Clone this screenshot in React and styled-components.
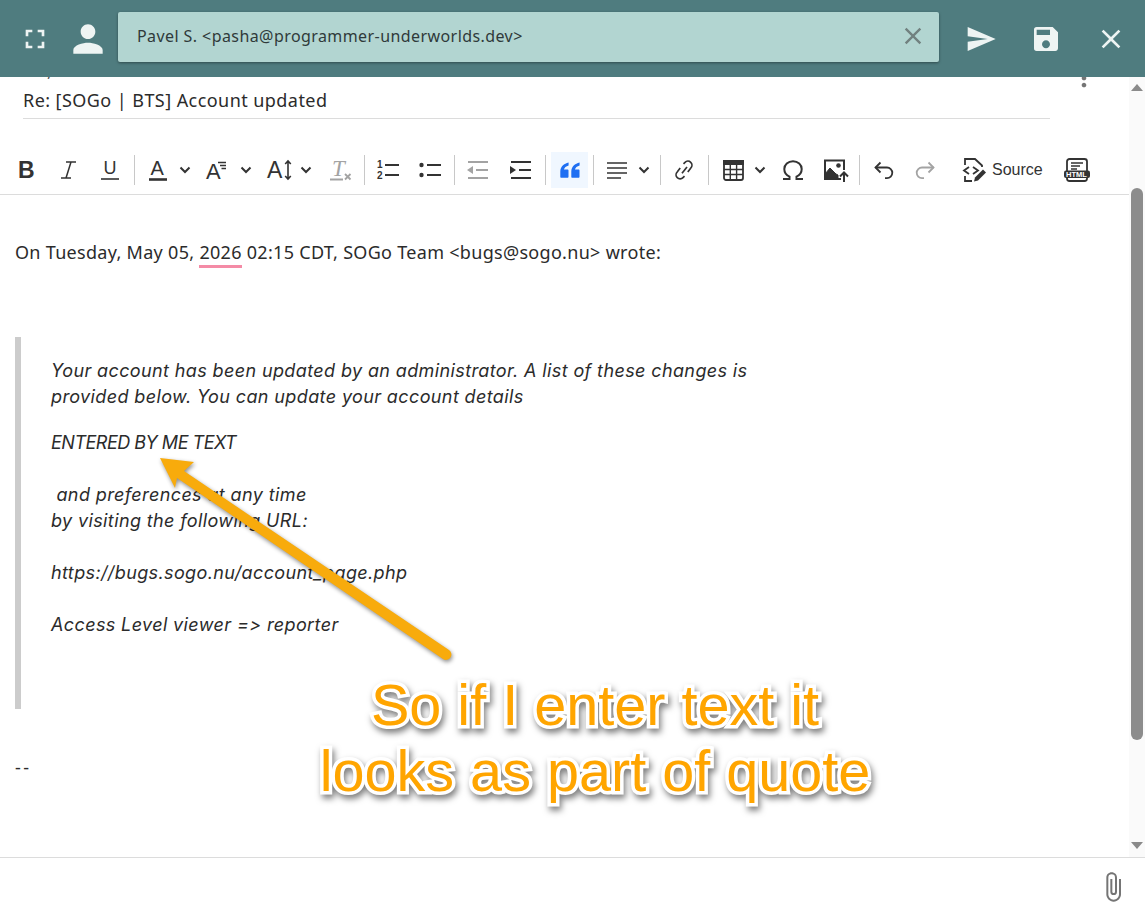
import React from 'react'
import styled, { createGlobalStyle } from 'styled-components'
import { MdFullscreen, MdPerson, MdClose, MdSend, MdSave, MdMoreVert, MdAttachFile } from 'react-icons/md'

const GlobalStyle = createGlobalStyle`
html, body { margin: 0; padding: 0; background: #fff; }
body { font-family: "Noto Sans", "Liberation Sans", sans-serif; color: #2b2b2b; }
`

const Page = styled.div`
position: relative;
width: 1145px;
height: 916px;
overflow: hidden;
display: flex;
flex-direction: column;
`

const Header = styled.header`
position: relative;
z-index: 2;
height: 77px;
flex: none;
background: #4f7c7f;
display: flex;
align-items: center;
`
const HeadIcon = styled.div`
width: ${p => p.$w}px;
margin-left: ${p => p.$ml || 0}px;
flex: none;
display: flex;
align-items: center;
justify-content: center;
color: #eef4f3;
`
const Chip = styled.div`
width: 821px;
height: 50px;
margin-left: 8px;
margin-bottom: 3px;
flex: none;
box-sizing: border-box;
padding: 0 12px 3px 19px;
background: #b2d5d1;
border-radius: 2px;
box-shadow: 0 1px 3px rgba(0, 0, 0, 0.4);
display: flex;
align-items: center;
justify-content: space-between;
font-size: 16px;
letter-spacing: 0.42px;
color: #2f3a3a;
svg { color: #71817f; }
`

const Main = styled.main`
flex: 1;
min-height: 0;
display: flex;
`
const Content = styled.div`
position: relative;
flex: 1;
min-width: 0;
display: flex;
flex-direction: column;
`
const ClippedField = styled.span`
position: absolute;
left: 47px;
top: -19px;
font-size: 18px;
color: #555;
`
const SubjectRow = styled.div`
height: 42px;
flex: none;
display: flex;
align-items: flex-start;
padding-left: 23px;
`
const SubjectField = styled.div`
width: 1027px;
height: 42px;
flex: none;
box-sizing: border-box;
padding-top: 9px;
line-height: 28px;
font-size: 18px;
letter-spacing: 0.44px;
border-bottom: 1px solid #dcdcdc;
`
const MoreButton = styled.div`
margin-left: 20px;
margin-top: -13px;
color: #757575;
display: flex;
`

const Toolbar = styled.div`
flex: none;
height: 76px;
box-sizing: border-box;
padding: 33px 0 6px 9px;
border-bottom: 1px solid #dcdcdc;
display: flex;
align-items: center;
`
const Btn = styled.div`
width: ${p => p.$w}px;
height: 36px;
margin-left: ${p => p.$ml || 0}px;
flex: none;
display: flex;
align-items: center;
justify-content: center;
color: ${p => (p.$off ? '#a3a3a3' : '#333')};
background: ${p => (p.$on ? '#f0f7ff' : 'transparent')};
`
const Sep = styled.div`
width: 1px;
height: 30px;
flex: none;
background: #c8c8c8;
margin: 0 5px 0 ${p => p.$ml || 5}px;
`
const SourceLabel = styled.span`
font-family: "Liberation Sans", sans-serif;
font-size: 16px;
color: #333;
width: 52px;
flex: none;
`

const Editor = styled.div`
flex: 1;
min-height: 0;
padding: 44px 0 0 15px;
font-size: 18px;
line-height: 26px;
letter-spacing: 0.3px;
color: #2b2b2b;
`
const Line = styled.p`
margin: 0;
`
const Signature = styled.p`
margin: 0;
letter-spacing: 2.5px;
`
const SpellWord = styled.span`
border-bottom: 3px solid #f48ba6;
padding-bottom: 1px;
`
const Quote = styled.blockquote`
margin: 72px 0 45px 0;
height: 372px;
box-sizing: border-box;
padding: 21px 0 0 30px;
border-left: 6px solid #cccccc;
font-family: "Inter", "Noto Sans", sans-serif;
font-size: 18px;
letter-spacing: 0.38px;
font-style: italic;
font-variant-ligatures: none;
font-feature-settings: "calt" 0;
`
const QuotePara = styled.p`
margin: 0 0 ${p => p.$after || 0}px;
`
const EnteredText = styled(QuotePara)`
letter-spacing: -0.5px;
`

const Scrollbar = styled.div`
width: 16px;
flex: none;
background: #fafafa;
display: flex;
flex-direction: column;
align-items: center;
`
const ArrowUp = styled.div`
margin-top: 7px;
width: 0;
height: 0;
border: 6px solid transparent;
border-top: 0;
border-bottom: 7px solid #8a8a8a;
`
const ArrowDown = styled.div`
margin-top: 102px;
width: 0;
height: 0;
border: 6px solid transparent;
border-bottom: 0;
border-top: 7px solid #8a8a8a;
`
const Thumb = styled.div`
margin-top: 97px;
width: 12px;
height: 552px;
border-radius: 6px;
background: #8c8c8c;
`

const Footer = styled.footer`
height: 59px;
flex: none;
box-sizing: border-box;
border-top: 1px solid #dcdcdc;
padding-right: 16px;
display: flex;
align-items: center;
justify-content: flex-end;
color: #757575;
`

const ArrowLayer = styled.svg`
position: absolute;
z-index: 3;
left: 0;
top: 0;
pointer-events: none;
filter: drop-shadow(1px 2px 2px rgba(0, 0, 0, 0.45));
`
const Callout = styled.div`
position: absolute;
z-index: 3;
left: 295px;
top: 672px;
width: 600px;
text-align: center;
font-family: "Liberation Sans", sans-serif;
font-size: 57.6px;
line-height: 66px;
color: #ffa500;
-webkit-text-stroke: 7px #fff;
paint-order: stroke fill;
filter: drop-shadow(2px 4px 3px rgba(0, 0, 0, 0.5));
`

const Icon = styled.svg`
display: block;
overflow: visible;
flex: none;
`
const Glyph = styled.text`
font-family: ${p => p.$serif ? '"Liberation Serif", serif' : '"Liberation Sans", sans-serif'};
font-size: ${p => p.$size}px;
font-weight: ${p => (p.$bold ? 700 : 400)};
font-style: ${p => (p.$italic ? 'italic' : 'normal')};
fill: ${p => p.$fill || 'currentColor'};
stroke: none;
`

const Svg = ({ w = 24, h = 24, children }) => (
    <Icon width={w} height={h} viewBox={`0 0 ${w} ${h}`} fill="none" stroke="currentColor" strokeWidth="2">
        {children}
    </Icon>
)

const Chevron = () => (
    <Svg w={12} h={8}><path d="M1.5 1.5 6 6l4.5-4.5" strokeWidth="2" /></Svg>
)

const App = () => {
    return (
        <>
            <GlobalStyle />
            <Page>
                <Header>
                    <HeadIcon $w={32} $ml={19}><MdFullscreen size={32} /></HeadIcon>
                    <HeadIcon $w={44} $ml={15}><MdPerson size={44} /></HeadIcon>
                    <Chip>
                        Pavel S. &lt;pasha@programmer-underworlds.dev&gt;
                        <MdClose size={28} />
                    </Chip>
                    <HeadIcon $w={32} $ml={26}><MdSend size={32} /></HeadIcon>
                    <HeadIcon $w={32} $ml={33}><MdSave size={32} /></HeadIcon>
                    <HeadIcon $w={32} $ml={33}><MdClose size={32} /></HeadIcon>
                </Header>
                <Main>
                    <Content>
                        <ClippedField>,</ClippedField>
                        <SubjectRow>
                            <SubjectField>Re: [SOGo | BTS] Account updated</SubjectField>
                            <MoreButton><MdMoreVert size={28} /></MoreButton>
                        </SubjectRow>
                        <Toolbar>
                            <Btn $w={36}><Svg w={18} h={20}><Glyph x="0" y="18" $size={23} $bold>B</Glyph></Svg></Btn>
                            <Btn $w={46}>
                                <Svg w={16} h={18}>
                                    <path d="M6 1h10M1 17h10M11 1 6 17" strokeWidth="1.5" />
                                </Svg>
                            </Btn>
                            <Btn $w={38}>
                                <Svg w={18} h={22}>
                                    <Glyph x="2.5" y="15" $size={18}>U</Glyph>
                                    <path d="M0 20h18" strokeWidth="1.6" />
                                </Svg>
                            </Btn>
                            <Sep />
                            <Btn $w={36}>
                                <Svg w={18} h={22}>
                                    <Glyph x="1.5" y="16" $size={20}>A</Glyph>
                                    <path d="M0 20.5h18" strokeWidth="2.6" />
                                </Svg>
                            </Btn>
                            <Btn $w={18}><Chevron /></Btn>
                            <Btn $w={44}>
                                <Svg w={22} h={22}>
                                    <Glyph x="1" y="20" $size={22}>A</Glyph>
                                    <path d="M13 3.5h8M15 6.5h6M16.5 9.5h4.5" strokeWidth="1.4" />
                                </Svg>
                            </Btn>
                            <Btn $w={16}><Chevron /></Btn>
                            <Btn $w={30} $ml={11}>
                                <Svg w={26} h={22}>
                                    <Glyph x="0" y="19" $size={23}>A</Glyph>
                                    <path d="M21 2v18M18.2 5 21 2l2.8 3M18.2 17l2.8 3 2.8-3" strokeWidth="1.6" />
                                </Svg>
                            </Btn>
                            <Btn $w={22}><Chevron /></Btn>
                            <Btn $w={36} $ml={6} $off>
                                <Svg w={22} h={22}>
                                    <Glyph x="2" y="17" $size={23} $serif $italic>T</Glyph>
                                    <path d="M0 20.5h13M15 15l5.5 5.5M20.5 15 15 20.5" strokeWidth="1.8" />
                                </Svg>
                            </Btn>
                            <Sep />
                            <Btn $w={36}>
                                <Svg w={22} h={20}>
                                    <Glyph x="0" y="8" $size={10} $bold>1</Glyph>
                                    <Glyph x="0" y="19" $size={10} $bold>2</Glyph>
                                    <path d="M8 5h14M8 15h14" strokeWidth="1.8" />
                                </Svg>
                            </Btn>
                            <Btn $w={38} $ml={5}>
                                <Svg w={22} h={20}>
                                    <circle cx="2.5" cy="5" r="2.2" fill="currentColor" stroke="none" />
                                    <circle cx="2.5" cy="15" r="2.2" fill="currentColor" stroke="none" />
                                    <path d="M8 5h14M8 15h14" strokeWidth="1.8" />
                                </Svg>
                            </Btn>
                            <Sep />
                            <Btn $w={36} $off>
                                <Svg w={22} h={20}>
                                    <path d="M1 2h20M9 10h12M1 18h20" strokeWidth="1.8" />
                                    <path d="M0 10l6-4v8z" fill="currentColor" stroke="none" />
                                </Svg>
                            </Btn>
                            <Btn $w={38} $ml={6}>
                                <Svg w={22} h={20}>
                                    <path d="M1 2h20M9 10h12M1 18h20" strokeWidth="1.8" />
                                    <path d="M6 10 0 6v8z" fill="currentColor" stroke="none" />
                                </Svg>
                            </Btn>
                            <Sep />
                            <Btn $w={37} $on>
                                <Svg w={20} h={16}>
                                    <path d="M8.6 0.5C4 1.5 0.3 4.8 0.3 9.5v5.2c0 .6.4 1 1 1h6.2c.6 0 1-.4 1-1V8.6c0-.6-.4-1-1-1H4c.3-2 2.1-3.6 4.6-4.2z" fill="#1f6ff2" stroke="none" />
                                    <path d="M19.6 0.5C15 1.5 11.3 4.8 11.3 9.5v5.2c0 .6.4 1 1 1h6.2c.6 0 1-.4 1-1V8.6c0-.6-.4-1-1-1H15c.3-2 2.1-3.6 4.6-4.2z" fill="#1f6ff2" stroke="none" />
                                </Svg>
                            </Btn>
                            <Sep />
                            <Btn $w={36}>
                                <Svg w={20} h={18}>
                                    <path d="M0 2h20M0 7h20M0 12h20M0 17h14" strokeWidth="1.6" />
                                </Svg>
                            </Btn>
                            <Btn $w={18}><Chevron /></Btn>
                            <Sep $ml={7} />
                            <Btn $w={36}>
                                <Svg w={20} h={20}>
                                    <path d="M8 13.2 13 7" strokeWidth="1.7" />
                                    <path d="M9.5 3.8 11 2.4a4 4 0 0 1 5.8 5.6l-3 4" strokeWidth="1.7" />
                                    <path d="M10.5 16.2 9 17.6a4 4 0 0 1-5.8-5.6l3-4" strokeWidth="1.7" />
                                </Svg>
                            </Btn>
                            <Sep $ml={6} />
                            <Btn $w={38}>
                                <Svg w={21} h={21}>
                                    <rect x="1" y="1" width="19" height="19" rx="2" strokeWidth="1.8" />
                                    <path d="M0 0h21v5H0z" fill="currentColor" stroke="none" />
                                    <path d="M1 9.5h19M1 14.5h19M7.3 5v15M13.6 5v15" strokeWidth="1.4" />
                                </Svg>
                            </Btn>
                            <Btn $w={15}><Chevron /></Btn>
                            <Btn $w={36} $ml={8}>
                                <Svg w={22} h={20}>
                                    <path d="M1 19h6.5v-2.4C4.3 15.2 2.3 12.3 2.3 9c0-4.4 3.7-7.8 8.7-7.8s8.7 3.4 8.7 7.8c0 3.3-2 6.2-5.2 7.6V19H21" strokeWidth="2" />
                                </Svg>
                            </Btn>
                            <Btn $w={36} $ml={7}>
                                <Svg w={25} h={23}>
                                    <path d="M17 20H1V1.5h19V11" strokeWidth="2" />
                                    <path d="M1 19v-4l5-6 6 6 2 1v3z" fill="currentColor" stroke="currentColor" strokeWidth="1" />
                                    <circle cx="14.5" cy="6.5" r="2.3" fill="currentColor" stroke="none" />
                                    <path d="M20 23v-9M16 17.5l4-4 4 4" strokeWidth="2" />
                                </Svg>
                            </Btn>
                            <Sep />
                            <Btn $w={38}>
                                <Svg w={20} h={18}>
                                    <path d="M6.5 1.5 1.5 6.5l5 5" strokeWidth="1.8" />
                                    <path d="M1.5 6.5H13a5.3 5.3 0 0 1 0 10.6h-2" strokeWidth="1.8" />
                                </Svg>
                            </Btn>
                            <Btn $w={38} $ml={3} $off>
                                <Svg w={20} h={18}>
                                    <path d="M13.5 1.5l5 5-5 5" strokeWidth="1.8" />
                                    <path d="M18.5 6.5H7a5.3 5.3 0 0 0 0 10.6h2" strokeWidth="1.8" />
                                </Svg>
                            </Btn>
                            <Btn $w={36} $ml={12}>
                                <Svg w={24} h={24}>
                                    <path d="M3 7V1h10l7 6.5V9M3 18v5h7" strokeWidth="1.8" />
                                    <path d="M7 9 2 12.5 7 16M11 9l5 3.500-5 3.500" strokeWidth="1.8" />
                                    <path d="M12 23.500l1-4 8-8 3 3-8 8z" fill="currentColor" stroke="none" />
                                </Svg>
                            </Btn>
                            <SourceLabel>Source</SourceLabel>
                            <Btn $w={36} $ml={15}>
                                <Svg w={26} h={24}>
                                    <rect x="3" y="1" width="20" height="22" rx="2.5" strokeWidth="1.8" />
                                    <path d="M7 5h12M7 8h9M7 11h6" strokeWidth="1.5" />
                                    <rect x="0" y="12.5" width="26" height="7.5" rx="2" fill="currentColor" stroke="none" />
                                    <Glyph x="2" y="19" $size={7.5} $bold $fill="#fff">HTML</Glyph>
                                </Svg>
                            </Btn>
                        </Toolbar>
                        <Editor>
                            <Line>On Tuesday, May 05, <SpellWord>2026</SpellWord> 02:15 CDT, SOGo Team &lt;bugs@sogo.nu&gt; wrote:</Line>
                            <Quote>
                                <QuotePara $after={20}>
                                    Your account has been updated by an administrator. A list of these changes is<br />
                                    provided below. You can update your account details
                                </QuotePara>
                                <EnteredText $after={26}>ENTERED BY ME TEXT</EnteredText>
                                <QuotePara>
                                    &nbsp;and preferences at any time<br />
                                    by visiting the following URL:<br />
                                    <br />
                                    https://bugs.sogo.nu/account_page.php<br />
                                    <br />
                                    Access Level viewer =&gt; reporter
                                </QuotePara>
                            </Quote>
                            <Signature>--</Signature>
                        </Editor>
                    </Content>
                    <Scrollbar>
                        <ArrowUp />
                        <Thumb />
                        <ArrowDown />
                    </Scrollbar>
                </Main>
                <Footer>
                    <MdAttachFile size={32} />
                </Footer>
                <ArrowLayer width="1145" height="916" viewBox="0 0 1145 916">
                    <path d="M160 458 194 462 184 471 449 650a5 5 0 0 1-6 9L177 478 175 488z" fill="#f8ab0c" />
                </ArrowLayer>
                <Callout>
                    So if I enter text it<br />
                    looks as part of quote
                </Callout>
            </Page>
        </>
    )
}

export default App
